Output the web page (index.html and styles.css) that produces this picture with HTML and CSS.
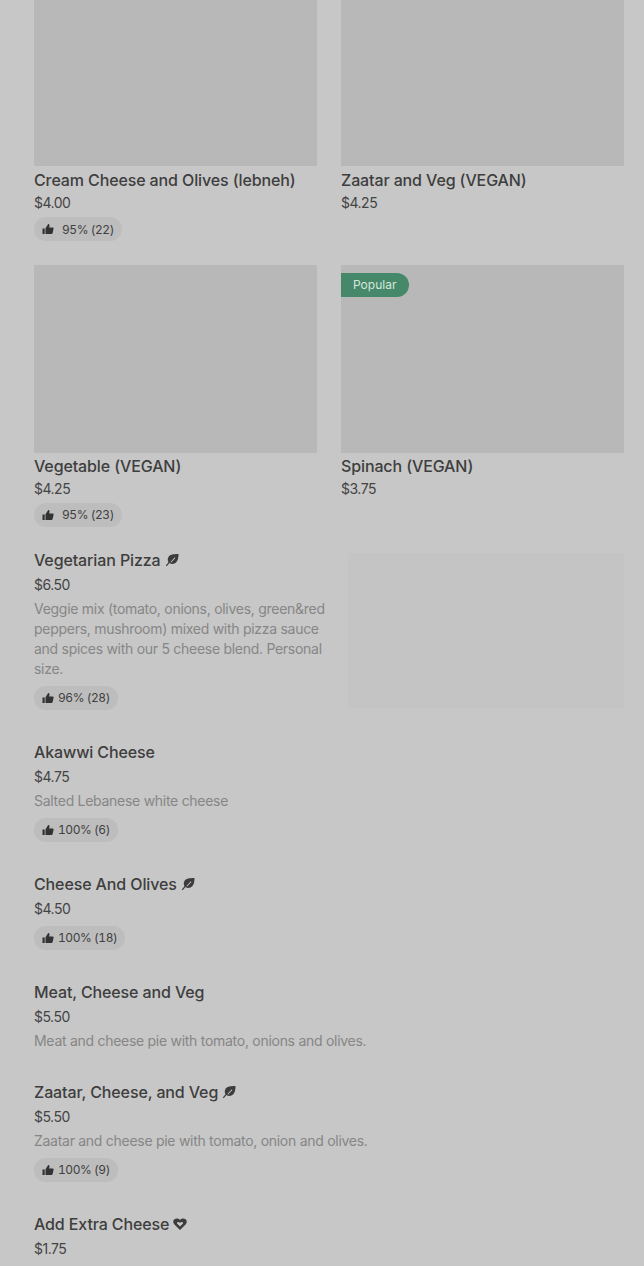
FILE: index.html
```html
<!DOCTYPE html>
<html>
<head>
    <title>Menu</title>
    <link rel="stylesheet" href="styles.css">
</head>
<body>
    <svg class="defs" width="0" height="0">
        <symbol id="thumb" viewBox="0 0 12 12">
            <path d="M0.5 5.500h2.200v5.500H0.500zM3.500 11V5.300L6.200 1c.9 0 1.400.6 1.300 1.500L7.200 4.600h3.400c.7 0 1.100.6 1 1.200l-1 4.300c-.1.500-.5.900-1 .9z"/>
        </symbol>
        <symbol id="leaf" viewBox="0 0 14 14">
            <path fill-rule="evenodd" d="M13.500 1C8 1 4.400 1.600 3.200 4.500c-.8 1.900-.4 3.500.3 4.700L.8 12.400l.9.8 2.800-3.100c1.300.9 3.100 1.300 4.900.5C12.300 9.400 13.500 6 13.500 1zM9.800 4.300l.6.6-4.300 4.600-.6-.6z"/>
        </symbol>
        <symbol id="heart" viewBox="0 0 14 14">
            <path fill-rule="evenodd" d="M7 13L1.200 7.200C-.2 5.700 0 3.400 1.500 2.300 3 1.200 5.300 1.300 7 3c1.700-1.700 4-1.800 5.500-.7 1.500 1.100 1.700 3.400.3 4.900zM7 5.800C6 4.900 5 4.700 4.400 5.200c-.6.500-.6 1.100-.1 1.600L7 9.500l2.700-2.700c.5-.5.500-1.100-.1-1.600C9 4.700 8 4.900 7 5.800z"/>
        </symbol>
    </svg>

    <div class="page">
        <!-- Tarjetas con foto -->
        <div class="grid">
            <div class="card">
                <div class="photo photo-cut"></div>
                <h3 class="name">Cream Cheese and Olives (lebneh)</h3>
                <div class="price">$4.00</div>
                <span class="rating rating-wide"><svg class="thumb"><use href="#thumb"/></svg>95% (22)</span>
            </div>
            <div class="card">
                <div class="photo photo-cut"></div>
                <h3 class="name">Zaatar and Veg (VEGAN)</h3>
                <div class="price">$4.25</div>
            </div>
            <div class="card">
                <div class="photo"></div>
                <h3 class="name">Vegetable (VEGAN)</h3>
                <div class="price">$4.25</div>
                <span class="rating rating-wide"><svg class="thumb"><use href="#thumb"/></svg>95% (23)</span>
            </div>
            <div class="card">
                <div class="photo"><span class="badge">Popular</span></div>
                <h3 class="name">Spinach (VEGAN)</h3>
                <div class="price">$3.75</div>
            </div>
        </div>

        <!-- Lista -->
        <div class="list">
            <div class="item item-photo">
                <div class="item-text">
                    <h3 class="name">Vegetarian Pizza <svg class="tag"><use href="#leaf"/></svg></h3>
                    <div class="price">$6.50</div>
                    <p class="desc">Veggie mix (tomato, onions, olives, green&amp;red peppers, mushroom) mixed with pizza sauce and spices with our 5 cheese blend. Personal size.</p>
                    <span class="rating"><svg class="thumb"><use href="#thumb"/></svg>96% (28)</span>
                </div>
                <div class="item-img"></div>
            </div>
            <div class="item">
                <h3 class="name">Akawwi Cheese</h3>
                <div class="price">$4.75</div>
                <p class="desc">Salted Lebanese white cheese</p>
                <span class="rating"><svg class="thumb"><use href="#thumb"/></svg>100% (6)</span>
            </div>
            <div class="item">
                <h3 class="name">Cheese And Olives <svg class="tag"><use href="#leaf"/></svg></h3>
                <div class="price">$4.50</div>
                <span class="rating"><svg class="thumb"><use href="#thumb"/></svg>100% (18)</span>
            </div>
            <div class="item">
                <h3 class="name">Meat, Cheese and Veg</h3>
                <div class="price">$5.50</div>
                <p class="desc">Meat and cheese pie with tomato, onions and olives.</p>
            </div>
            <div class="item">
                <h3 class="name">Zaatar, Cheese, and Veg <svg class="tag"><use href="#leaf"/></svg></h3>
                <div class="price">$5.50</div>
                <p class="desc">Zaatar and cheese pie with tomato, onion and olives.</p>
                <span class="rating"><svg class="thumb"><use href="#thumb"/></svg>100% (9)</span>
            </div>
            <div class="item">
                <h3 class="name">Add Extra Cheese <svg class="tag"><use href="#heart"/></svg></h3>
                <div class="price">$1.75</div>
            </div>
        </div>
    </div>
</body>
</html>
```

FILE: styles.css
```css
html, body { margin: 0; padding: 0; }
body { background: #c7c7c7; color: #3a3a3a; font-family: Inter, "Liberation Sans", sans-serif; height: 1266px; overflow: hidden; }
.defs { display: block; height: 0; }
.page { padding: 0 20px 0 34px; }

.grid { display: grid; grid-template-columns: 283px 283px; column-gap: 24px; row-gap: 24px; }
.card { display: flex; flex-direction: column; align-items: flex-start; }
.photo { width: 100%; height: 188px; background: #b8b8b8; padding-top: 8px; box-sizing: border-box; }
.photo-cut { height: 166px; margin-bottom: 1.4px; }
.card .name { margin-top: 0.6px; }
.card .price { margin-top: 1px; }
.card .rating { margin: 4.5px 0 0; height: 23.5px; }

.name { margin: 0; font-size: 16px; font-weight: 500; line-height: 24px; letter-spacing: -0.12px; color: #3e3e3e; }
.price { font-size: 14px; line-height: 20px; letter-spacing: -0.5px; color: #444; margin-top: 3px; }
.desc { margin: 4px 0 0; font-size: 14px; line-height: 20px; letter-spacing: -0.28px; color: #868686; }

.rating { display: inline-flex; align-items: center; height: 24px; padding: 0 8px; border-radius: 12px; background: #bdbdbd; font-size: 12px; letter-spacing: -0.45px; font-variant-numeric: tabular-nums; color: #3f3f3f; margin: 7px 0 1px; }
.thumb { width: 12px; height: 12px; margin-right: 4px; fill: #333; }
.rating-wide .thumb { margin-right: 8px; }
.tag { width: 14px; height: 14px; vertical-align: -1px; fill: #3c3c3c; }

.badge { display: inline-block; height: 24px; line-height: 24px; padding: 0 13px 0 12px; border-radius: 0 12px 12px 0; background: #46896a; color: #d8e6de; font-size: 12px; }

.list { margin-top: 21.4px; }
.item { margin-bottom: 29px; display: flex; flex-direction: column; align-items: flex-start; }
.item-photo { flex-direction: row; justify-content: space-between; width: 590px; }
.item-text { width: 296px; display: flex; flex-direction: column; align-items: flex-start; }
.item-img { width: 276px; height: 155px; margin-top: 5px; background: #c4c4c4; }
```
